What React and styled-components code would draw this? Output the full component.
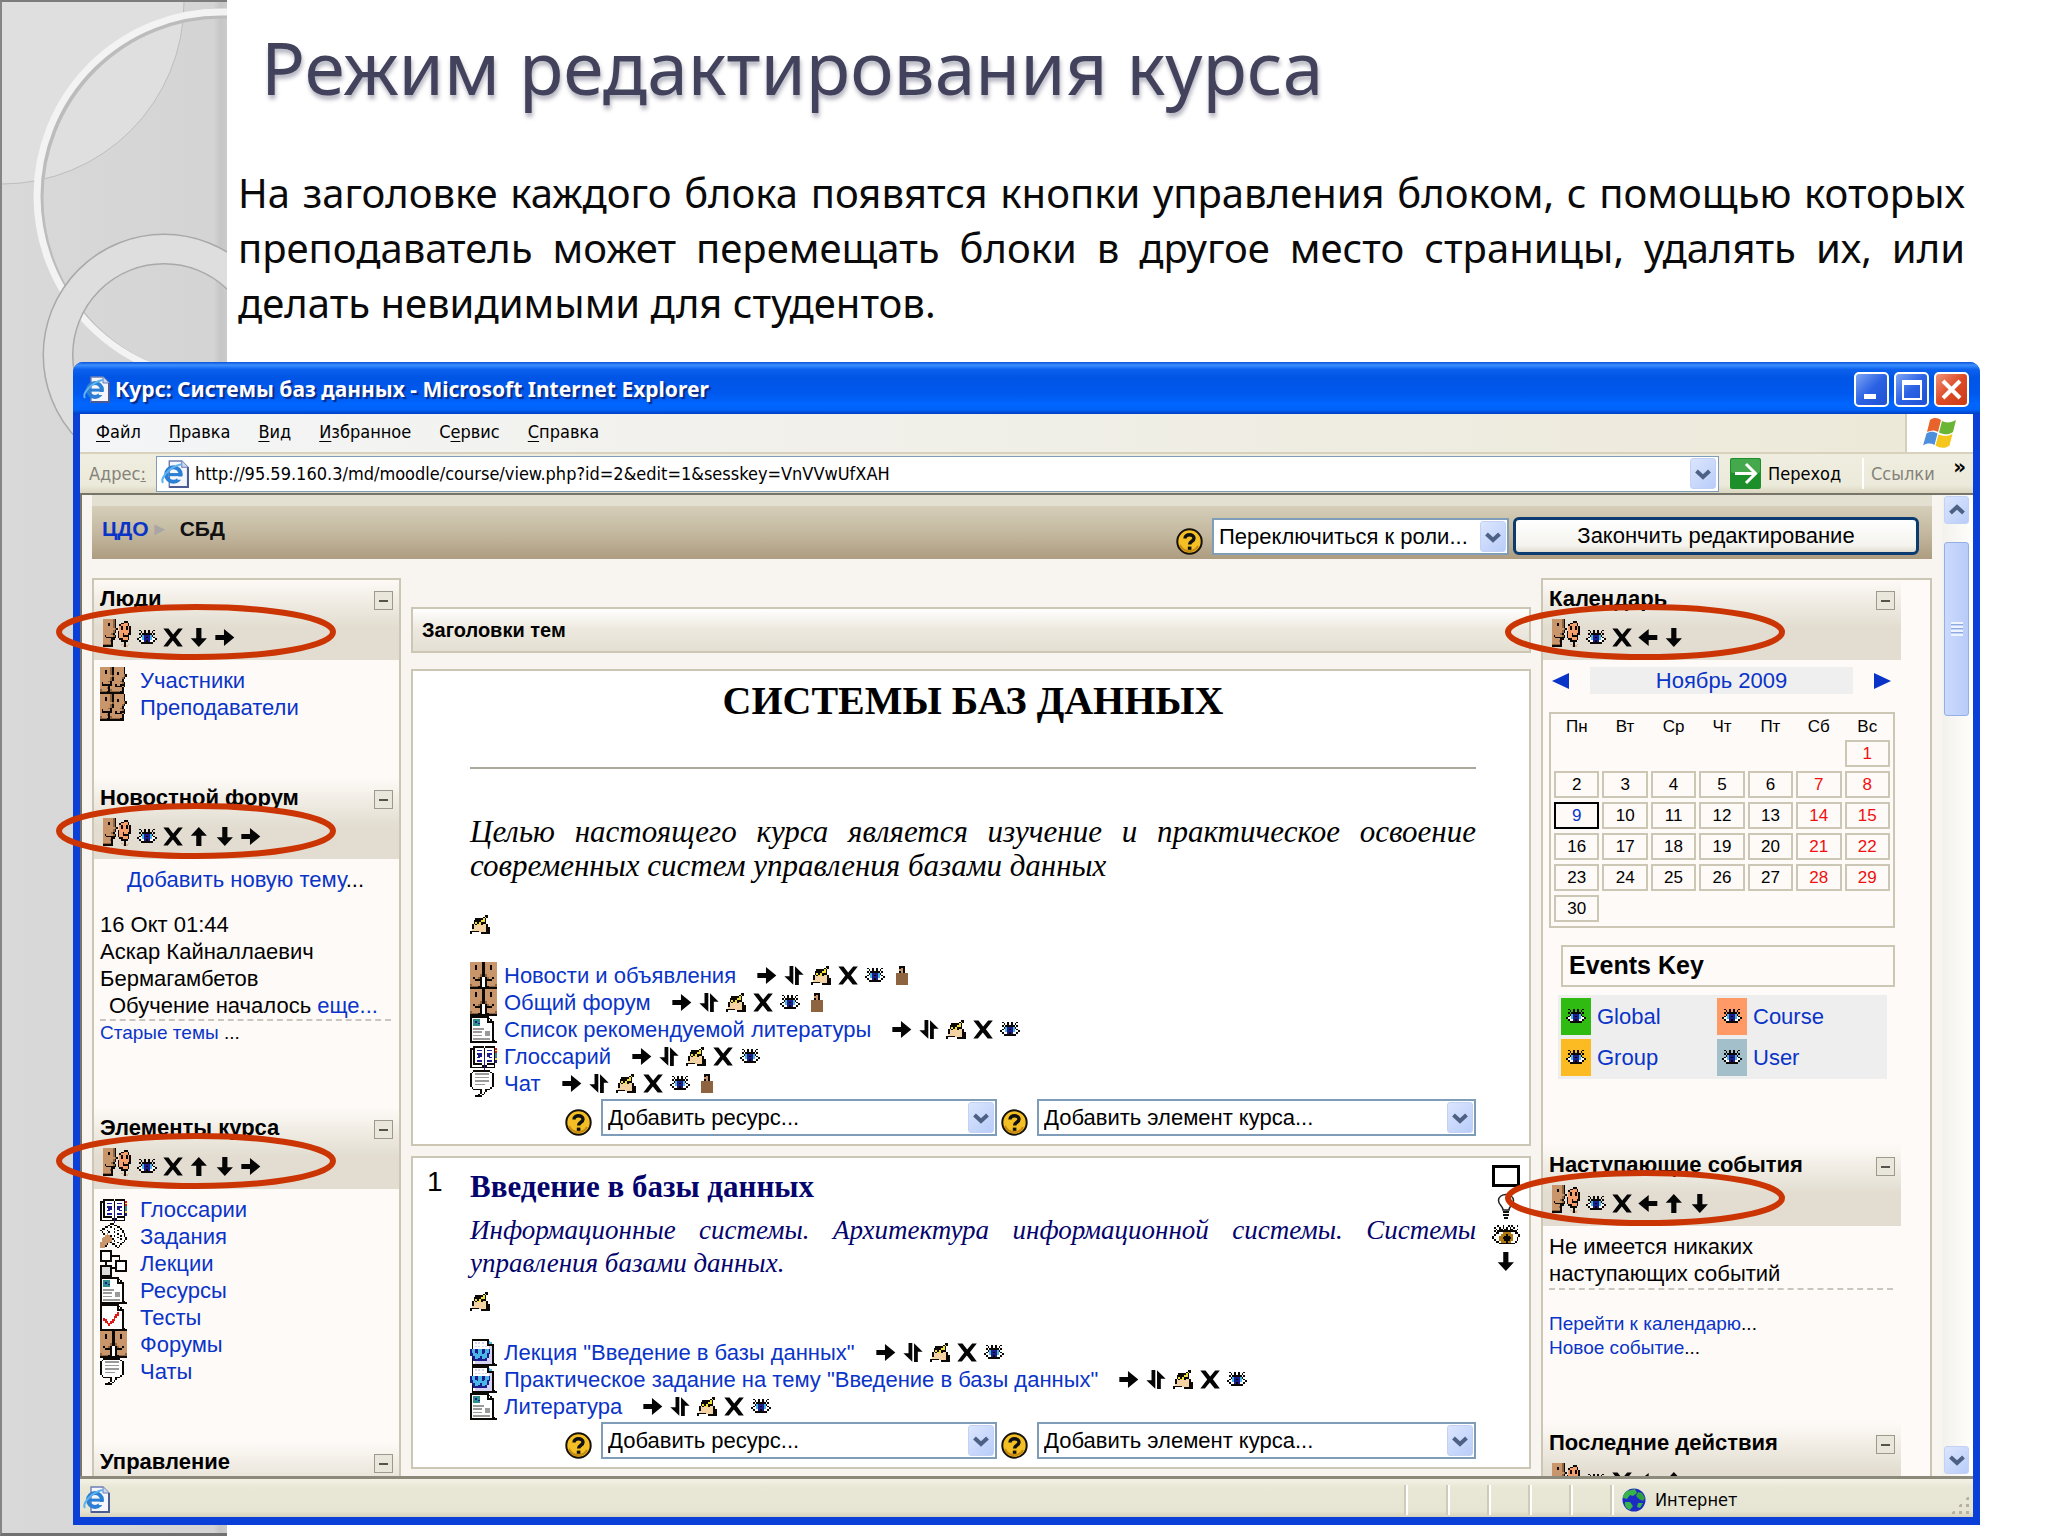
import React from "react";
import styled, { createGlobalStyle, css } from "styled-components";

const sans = `"Liberation Sans", Arial, sans-serif`;
const serif = `"Liberation Serif", "Times New Roman", serif`;
const tahoma = `"DejaVu Sans Condensed", "DejaVu Sans", Tahoma, sans-serif`;
const slideFont = `"Noto Sans", "Open Sans", sans-serif`;

/* ---------- icons ---------- */

const palette = {
  k: "#0b0806",
  b: "#c8966a",
  l: "#dcb187",
  m: "#8d6340",
  w: "#ffffff",
  g: "#9a9a9a",
  s: "#dcdcdc",
  o: "#f5a06c",
  t: "#2f8f8a",
  n: "#1c1c8c",
  u: "#2f62d8",
  y: "#f2e13a",
  r: "#e01818",
  p: "#f3d3a4",
  c: "#48b7e6",
  a: "#b07a12",
  v: "#d6d3f2",
};

const bitmaps = {
  users: [
    "bbbbbbmkbbbbbbk.",
    "bbbbbbmkbbbbbbk.",
    "bbbkbbmkbbbbbbk.",
    "bbbkbbmkbbkbbbk.",
    "bbbbbbmkbbkbbbmk",
    "bbbbbbbmbbbbbbmk",
    "bbbbbbmkbbbbbmk.",
    "bbbbbbmkbbbbbk..",
    "bbbbbmkbbbbbmk..",
    "bkbbbbkbbbbbbmk.",
    "bkkkkkkbbkbbkkk.",
    "bbbbbkbbbkkkkbk.",
    "bbbbmkbbbbbbbk..",
    "mbbbbkmbbbbbbk..",
    "mmmmkkmmmmmmkk..",
    "kkkkkkkkkkkkkk..",
  ],
  forum: [
    "bbbbbbbkkbbbbbbb",
    "bbbbbbbkkbbbbbbb",
    "bbbkbbbkkbbbkbbb",
    "bbbkbbbkkbbbkbbb",
    "bbbkbbbkkbbbkbbb",
    "bbbbbbbkkbbbbbbb",
    "bbbbbbbkkbbbbbbb",
    "bbbbbbmkkmbbbbbb",
    "bbbbbbmkkmbbbbbb",
    "bbkbbmkwwkmbbkbb",
    "bbbkkkkwwkkkkbbb",
    "bbbbbbkwwkbbbbbb",
    "bbbbbbkwwkbbbbbb",
    "mbbbbbkwwkbbbbbm",
    "mmmmmkkwwkkmmmmm",
    "kkkkkkkkkkkkkkkk",
  ],
  group: [
    "bbbbbbmk.........",
    "bbbbbbmk.....kk..",
    "bbbkbbmk...kkook.",
    "bbbkbbmk..kooook.",
    "bbbbbbmk..okookok",
    "bbbbbbbmk.okookok",
    "bbbbbbmk..ooooook",
    "bbbbbbmk.kooooook",
    "bbbbbmk..kookookk",
    "bkbbbbmk.kookkkk.",
    "bbkkkkkk.koooook.",
    "bbbbbkk...kkoook.",
    "bbbbmk.....kkkk..",
    "bbbbbk.......k...",
    "mmmmmk.....l.k.l.",
    "kkkkkk......lkl..",
  ],
  resource: [
    "kkkkkkkkkkk.....",
    "kwwwwwwwwwkk....",
    "kwttttwwwwkwk...",
    "kwtnttwwwwkkkk..",
    "kwtttnwwwwwwwk..",
    "kwttttwwwwwwwk..",
    "kwwwwwwwwwwwwk..",
    "kwggggggwwwwwk..",
    "kwwwwwwwwwwwwk..",
    "kwgggggwwgggwk..",
    "kwwwwwwwwgggwk..",
    "kwgggggwwgggwk..",
    "kwwwwwwwwwwwwk..",
    "kwggggggggggwk..",
    "kwwwwwwwwwwwwkk.",
    "kkkkkkkkkkkkkkkk",
  ],
  quiz: [
    "kkkkkkkkkkk.....",
    "kwwwwwwwwwkk....",
    "kwwwwwwwwwkwk...",
    "kwwwwwwwwwkkkk..",
    "kwwwwwwwwwwwwk..",
    "kwwwwwwwwwrwwk..",
    "kwwwwwwwwrrwwk..",
    "kwwwwwwwrrwwwk..",
    "kwrwwwwwrwwwwk..",
    "kwrrwwwrrwwwwk..",
    "kwwrrwrrwwwwwk..",
    "kwwwrrrwwwwwwk..",
    "kwwwwrwwwwwwwk..",
    "kwwwwwwwwwwwwk..",
    "kwwwwwwwwwwwwkk.",
    "kkkkkkkkkkkkkkkk",
  ],
  glossary: [
    "................",
    "................",
    "..kkkkkk.kkkkkk.",
    "kkkwwwwwkwwwwwkr",
    "kwkwnnnwkwnnnwky",
    "kwkwwwwwkwwwwwkr",
    "kwkwnnnwkwnnnwkt",
    "kwkwwnnwnwnnwwkt",
    "kwkwnnwwnwwnnwku",
    "kwkwwwwwnwwwwwky",
    "kwkwnnnwnwnnnwkn",
    "kwkwwwwwnwwwwwkn",
    "kwkkkkkwnwkkkkk.",
    "kwwwwwwknkwwwwk.",
    "kkkkkkkknkkkkkk.",
    "........n.......",
  ],
  chat: [
    "..kkkkkkkkkk....",
    ".kwwwwwwwwwwk...",
    "kwwggggggggwwk..",
    "kwwwwwwwwwwwwk..",
    "kwwggggggggwwk..",
    "kwwwwwwwwwwwwk..",
    "kwwggggggggwwk..",
    "kwwwwwwwwwwwwk..",
    "kwwggggggwwwwk..",
    "kwwwwwwwwwwwwk..",
    ".kwwwwwwwwwwk...",
    "..kkkkkwwkkk....",
    "......kwwk......",
    "......kwk.......",
    ".....kwk........",
    "...kkkk.........",
  ],
  assignment: [
    "......kk........",
    ".....kwwkk......",
    "...kkwkwwwkk....",
    ".kkwwwwwkwwwk...",
    "kwwwkwwwwwkwwk..",
    ".kwwwkwwkwwwwk..",
    "..kwbwwwwwkwwwk.",
    "...bbbkwkwwwkwk.",
    "..bbbbbwwwkwwwwk",
    ".bbbbbbkwwwwkwwk",
    ".bbbbbbwkwwwwwk.",
    "bbbbbbkwwwkwwk..",
    "bbbbk..kkwwwk...",
    "bbbk.....kwk....",
    "bbb.......k.....",
    "................",
  ],
  lesson: [
    "kkkkkkk.........",
    "kwwwwwk.........",
    "kwwwwwk.........",
    "kwwwwwkkkkkk....",
    "kwwwwwk....k....",
    "kwwwwwk....k....",
    "kkkkkkk..kkkkkkk",
    "...k.....kwwwwwk",
    "...k.....kwwwwwk",
    "kkkkkkk..kwwwwwk",
    "kssssskkkkwwwwwk",
    "ksssssk..kwwwwwk",
    "ksssssk..kkkkkkk",
    "ksssssk.........",
    "ksssssk.........",
    "kkkkkkk.........",
  ],
  word: [
    ".kkkkkkkkkk.....",
    ".kwwwwwwwwkc....",
    ".kwvwvwvwwkcc...",
    ".kwwwwwwwwkkkk..",
    ".kwvwvwvwvwvvk..",
    ".kwwwwwwwwwvvk..",
    "nccnnccnnccnvk..",
    "nccnnccnnccnvk..",
    "nnccnccnccnnvk..",
    "nnccccccccnvvk..",
    ".nncccncccnvvk..",
    ".knccnnccnvvvk..",
    ".knnnnnnnnvvvk..",
    ".kwvvvvvvvvvvk..",
    ".kwvvvvvvvvvvkk.",
    ".kkkkkkkkkkkkkkk",
  ],
  hand: [
    "........kk.",
    ".......kyk.",
    "...kkkkyk..",
    "..kkkkyyk..",
    "..kykykkk..",
    ".kpkyykppk.",
    ".kpppppppk.",
    ".kpppppppkk",
    ".ppppppppkk",
    "kkkkkppppkk",
    "k.....kkkkk",
  ],
  eye: [
    "...........",
    ".k..k.k..k.",
    "..k.k.k.k..",
    ".k.kkkkk.k.",
    "..kcnnnck..",
    ".kwcnkncwk.",
    "kwwcnnncwwk",
    ".kwwnknwwk.",
    "..kkkkkkk..",
    "...........",
    "...........",
  ],
  person: [
    "...kkk...",
    "...kbk...",
    "...bbk...",
    "...kbk...",
    "..mmmmm..",
    "..mmmmm..",
    "..mmmmm..",
    "..mmmmm..",
    "..mmmmm..",
    "..mmmmm..",
    "..mmmmm..",
  ],
  bigEye: [
    "...k..k..k.k..k.",
    ".k..k.k.k.k.k...",
    "..k.kk.kk.kk..k.",
    ".k.kkkkkkkkkkk..",
    "..kkwwaaaaawwkk.",
    ".kwwwaaakaaawwwk",
    "kwwwaaakkkaawwwk",
    "kwwwaakkkkkawwk.",
    ".kwwaaakkkaawwk.",
    "..kkwaaakaawwk..",
    "....kkkkkkkkk...",
    "................",
  ],
};

const Pixmap = styled.svg`
  display: block;
  flex: none;
  width: ${(p) => p.$w}px;
  height: ${(p) => p.$h}px;
`;

const Bitmap = ({ name, w, h }) => {
  const rows = bitmaps[name];
  const cells = [];
  rows.forEach((row, y) => {
    let x = 0;
    while (x < row.length) {
      let end = x + 1;
      while (end < row.length && row[end] === row[x]) end++;
      if (row[x] !== ".") {
        cells.push(<rect key={`${x}-${y}`} x={x} y={y} width={end - x} height="1" fill={palette[row[x]]} />);
      }
      x = end;
    }
  });
  return (
    <Pixmap
      $w={w}
      $h={h}
      viewBox={`0 0 ${rows[0].length} ${rows.length}`}
      preserveAspectRatio="none"
      shapeRendering="crispEdges"
      aria-hidden="true"
    >
      {cells}
    </Pixmap>
  );
};

const shapes = {
  right: "M0 4H5V0.5L11 5.5L5 10.5V7H0Z",
  left: "M11 4H6V0.5L0 5.5L6 10.5V7H11Z",
  up: "M4 11V5H0.8L5.5 0L10.2 5H7V11Z",
  down: "M4 0V6H0.8L5.5 11L10.2 6H7V0Z",
  del: "M0 0.3H3L5.7 3.7L8.6 0.3H11.3L7.3 5.4L11.3 10.7H8.3L5.5 7.2L2.6 10.7H0L4 5.5Z",
  move: "M3 0H5.2V10.800L0 6H3ZM6.200 11V0.2L11.200 5H8.400V11Z",
};

const ActionIcon = ({ name }) => {
  if (shapes[name]) {
    return (
      <Pixmap $w={20} $h={19} viewBox="-0.2 0 11.600 11" aria-hidden="true">
        <path d={shapes[name]} fill="#050505" />
      </Pixmap>
    );
  }
  return <Bitmap name={name} w={20} h={19} />;
};

const ExplorerIcon = ({ size = 27 }) => (
  <Pixmap $w={size} $h={size} viewBox="0 0 27 27" aria-hidden="true">
    <path d="M8 1H20L26 7V26H8Z" fill="#f4f6fb" stroke="#6b7fb5" strokeWidth="1.4" />
    <path d="M20 1V7H26" fill="#cfd8ee" stroke="#6b7fb5" />
    <path d="M26 7V26H8" fill="none" stroke="#4a5c93" strokeWidth="2" />
    <ellipse cx="12" cy="14" rx="7" ry="7" fill="none" stroke="#2b7fd4" strokeWidth="4" />
    <rect x="7" y="12.6" width="12" height="3" fill="#2b7fd4" />
    <path d="M15 16H22V19H16Z" fill="#f4f6fb" />
    <path d="M2 22C-1 18 8 6 20 4" fill="none" stroke="#5eb3ee" strokeWidth="2" />
  </Pixmap>
);

const HelpIcon = () => (
  <Pixmap $w={27} $h={27} viewBox="0 0 27 27" aria-hidden="true">
    <circle cx="13.5" cy="13.5" r="12.2" fill="#f3bf25" stroke="#15110a" strokeWidth="2" />
    <path d="M4 17A10 10 0 0 0 22 18" fill="none" stroke="#c98a12" strokeWidth="2" />
    <path d="M9 10.5C9 5.5 18 5.5 18 10.3C18 13.5 13.6 13 13.6 16.6" fill="none" stroke="#111" strokeWidth="3.4" />
    <rect x="11.8" y="18.6" width="3.6" height="3.2" fill="#111" />
  </Pixmap>
);

const Chevron = ({ up }) => (
  <Pixmap $w={16} $h={12} viewBox="0 0 16 12" aria-hidden="true">
    <path d={up ? "M1.5 9L8 3L14.5 9" : "M1.5 3L8 9L14.5 3"} fill="none" stroke="#4d6185" strokeWidth="4" />
  </Pixmap>
);

const WindowsFlag = () => (
  <Pixmap $w={36} $h={32} viewBox="0 0 36 32" aria-hidden="true">
    <path d="M8 3C12 0 16 1 19 3L16 15C13 13 9 13 5 15Z" fill="#e8622c" />
    <path d="M20 4C24 6 29 6 34 3L31 15C27 18 22 18 17 15.500Z" fill="#6bb536" />
    <path d="M4.500 16.500C8 14 12 14.500 15.500 16.500L12.500 28C9 26 5 26 1 28.500Z" fill="#4d8fdc" />
    <path d="M16.500 17.500C21 19.500 26 19.500 30.500 17L27.500 28.500C23 32 18 31 13.500 28.500Z" fill="#f5c61c" />
  </Pixmap>
);

const Globe = () => (
  <Pixmap $w={24} $h={24} viewBox="0 0 24 24" aria-hidden="true">
    <circle cx="12" cy="12" r="11.500" fill="#1b2bc4" />
    <path d="M5 3L13 1L15 5L11 8L8 7L5 11L1 10C1 7 3 4 5 3Z" fill="#37b34a" />
    <path d="M16 4L20 5L23 10L21 13L17 11L14 8Z" fill="#2f9f41" />
    <path d="M3 14L8 14L11 18L8 22C5 21 2 18 3 14Z" fill="#37b34a" />
    <path d="M16 15L21 15L18 20L15 19Z" fill="#37b34a" />
  </Pixmap>
);

/* ---------- slide ---------- */

const GlobalStyle = createGlobalStyle`
  * { box-sizing: border-box; }
  body { margin: 0; background: #fff; }
  a { color: #0a34c8; text-decoration: none; }
  h1, h2, h3, p, ul { margin: 0; padding: 0; font-weight: normal; }
  ul { list-style: none; }
  button { font: inherit; margin: 0; padding: 0; }
`;

const Slide = styled.main`
  position: relative;
  display: flex;
  flex-direction: column;
  height: 100vh;
  padding: 14px 68px 11px 73px;
  overflow: hidden;
  font-family: ${sans};
`;

const Ornament = styled.svg`
  position: absolute;
  left: 0;
  top: 0;
  width: 227px;
  height: 100%;
  background: linear-gradient(90deg, #d9d9d9, #d4d4d4 94%, #c6c6c6 97%, #cbcbcb);
  border-left: 2px solid #858585;
  border-top: 2px solid #7c7c7c;
  border-bottom: 3px solid #707070;
`;

const SlideTitle = styled.h1`
  position: relative;
  padding-left: 188px;
  font: 73px/106px ${slideFont};
  color: #42425c;
  text-shadow: 1px 4px 4px rgba(60, 60, 90, 0.4);
`;

const SlideText = styled.p`
  position: relative;
  margin: 45px 15px 0 165px;
  padding-bottom: 32px;
  font: 40px/55px ${slideFont};
  color: #0a0a0a;
  text-align: justify;
`;

const decor = (
  <Ornament aria-hidden="true">
    <circle cx="0" cy="0" r="182" fill="#dfdfdf" stroke="#bdbdbd" />
    <circle cx="221" cy="196" r="182" fill="none" stroke="#bcbcbc" strokeWidth="5" />
    <circle cx="219" cy="194" r="184" fill="none" stroke="#f3f3f3" strokeWidth="7" />
    <circle cx="162" cy="353" r="106" fill="none" stroke="#a9a9a9" strokeWidth="31" />
    <circle cx="162" cy="353" r="106" fill="none" stroke="#dedede" strokeWidth="28" />
  </Ornament>
);

/* ---------- browser window ---------- */

const BrowserWindow = styled.section`
  position: relative;
  display: flex;
  flex-direction: column;
  flex: 1;
  min-height: 0;
  border: solid #0a3fd8;
  border-width: 0 7px 8px;
  border-radius: 10px 10px 0 0;
  background: #ece9d8;
  box-shadow: inset 1px 0 0 #1663f5;
`;

const TitleBar = styled.header`
  display: flex;
  align-items: center;
  gap: 5px;
  height: 52px;
  margin: 0 -7px;
  padding: 2px 11px 0 10px;
  border-radius: 10px 10px 0 0;
  background: linear-gradient(#0a53d8, #3c90ff 6%, #0c62ee 14%, #0055e5 30%, #0058ee 60%, #0066ff 82%, #0062f8 92%, #003fc4);
`;

const WindowTitle = styled.h2`
  flex: 1;
  font: bold 21px/28px ${slideFont};
  color: #fff;
  text-shadow: 2px 2px 1px #0a2a86;
`;

const Caption = styled.button`
  display: grid;
  place-items: center;
  width: 35px;
  height: 35px;
  border: 2px solid #fff;
  border-radius: 5px;
  background: ${(p) =>
    p.$close ? "linear-gradient(135deg, #f0937a, #de4a26 50%, #c83a16)" : "linear-gradient(135deg, #7ea4f4, #2b62e4 50%, #1f50d2)"};
`;

const Toolbar = styled.nav`
  display: flex;
  align-items: stretch;
  height: 40px;
  padding-left: 2px;
  background: linear-gradient(90deg, #f4f5f7, #f1f0ea 40%, #ece9d8);
  border-bottom: 2px solid #d8d2bd;
`;

const MenuItem = styled.a`
  margin: 0 14px;
  font: 18px/36px ${tahoma};
  color: #000;
  u {
    text-underline-offset: 3px;
  }
`;

const LogoCell = styled.div`
  display: grid;
  place-items: center;
  width: 68px;
  margin-left: auto;
  background: #fff;
  border-left: 2px solid #d3cfbc;
`;

const AddressBar = styled.div`
  display: flex;
  align-items: center;
  height: 41px;
  padding-left: 9px;
  font: 18px/28px ${tahoma};
  background: linear-gradient(#efeddf, #eceada 80%, #dad5c0);
  border-bottom: 2px solid #77746a;
`;

const AddressLabel = styled.label`
  width: 67px;
  color: #84827a;
`;

const AddressField = styled.div`
  display: flex;
  align-items: center;
  flex: 1;
  height: 36px;
  padding: 0 2px 0 4px;
  background: #fff;
  border: 1px solid #7f9db9;
`;

const AddressInput = styled.input`
  flex: 1;
  min-width: 0;
  padding: 0;
  margin-left: 6px;
  border: 0;
  outline: 0;
  font: inherit;
  background: none;
`;

const arrowFace = css`
  display: grid;
  place-items: center;
  border: 1px solid #c3d1f5;
  border-radius: 3px;
  background: linear-gradient(135deg, #dbe5fd, #b9cdfa);
`;

const DropButton = styled.button`
  ${arrowFace}
  width: 26px;
  height: 31px;
`;

const GoButton = styled.button`
  display: flex;
  align-items: center;
  gap: 7px;
  width: 134px;
  margin-left: 11px;
  border: 0;
  border-right: 2px solid #fff;
  background: none;
`;

const LinksMenu = styled.a`
  display: flex;
  justify-content: space-between;
  width: 109px;
  padding: 0 7px;
  color: #84827a;
  b {
    color: #000;
    font-size: 22px;
    line-height: 14px;
  }
`;

const Viewport = styled.div`
  display: flex;
  flex: 1;
  min-height: 0;
  border-left: 2px solid #77746a;
  background: #f8f5f1;
  overflow-x: visible;
  overflow-y: clip;
`;

const ScrollTrack = styled.div`
  display: flex;
  flex-direction: column;
  width: 31px;
  padding: 1px 4px 2px 2px;
  background: linear-gradient(90deg, #f3f1ec, #fefefb);
`;

const ScrollButton = styled.button`
  ${arrowFace}
  width: 100%;
  height: 28px;
`;

const ScrollThumb = styled.div`
  display: grid;
  place-items: center;
  height: 174px;
  margin: 18px 0 auto;
  border: 1px solid #94aee8;
  border-radius: 3px;
  background: linear-gradient(90deg, #cbdafd, #b9cbf8);
  span {
    width: 12px;
    height: 14px;
    background: repeating-linear-gradient(#eef4fe 0 2px, #8caae0 2px 3px, transparent 3px 4px);
  }
`;

const StatusBar = styled.footer`
  display: flex;
  align-items: center;
  height: 41px;
  padding: 3px 0 0 3px;
  border-top: 3px solid #8d897b;
  background: linear-gradient(#f4f2e6, #e9e8d7 20%, #e6e4d2 85%, #d6d2bd);
  font: 18px/28px ${tahoma};
`;

const StatusCell = styled.div`
  display: flex;
  align-items: center;
  gap: 9px;
  width: ${(p) => p.$w}px;
  height: 30px;
  padding-left: 8px;
  border-left: 2px solid #fff;
  box-shadow: -2px 0 0 #cfcbb8;
  &:first-of-type {
    margin-left: auto;
  }
`;

const Grip = styled.span`
  align-self: flex-end;
  width: 20px;
  height: 20px;
  margin: 0 3px 0 auto;
  background: radial-gradient(circle, #b5b19e 2px, transparent 2px) 0 0 / 7px 7px;
  clip-path: polygon(100% 0, 100% 100%, 0 100%);
`;

/* ---------- course page ---------- */

const Page = styled.div`
  flex: 1;
  min-width: 0;
  padding: 0 10px;
`;

const NavBar = styled.div`
  display: flex;
  align-items: center;
  height: 64px;
  padding: 11px 13px 0 10px;
  border-top: 11px solid #e3e0d2;
  background: linear-gradient(#d5ceb9, #c4b9a0 50%, #ad9c80);
  font: 22px/28px ${sans};
`;

const Crumb = styled.a`
  margin-top: -18px;
  font-weight: bold;
  font-size: 21px;
  color: ${(p) => (p.$current ? "#111" : "#0a34c8")};
`;

const CrumbArrow = styled.span`
  width: 31px;
  margin-top: -18px;
  padding-left: 2px;
  font-size: 18px;
  color: #aaa6a6;
`;

const RoleForm = styled.form`
  display: flex;
  align-items: flex-end;
  gap: 4px;
  margin: -4px 0 0 auto;
`;

const HelpLink = styled.a`
  flex: none;
  margin-right: 5px;
`;

const SelectBox = styled.span`
  position: relative;
  flex: ${(p) => p.$grow || "none"};
  width: ${(p) => p.$w || "auto"};
  select {
    display: block;
    appearance: none;
    width: 100%;
    height: 37px;
    padding: 0 32px 0 5px;
    border: 2px solid #7f9db9;
    border-radius: 0;
    background: #fff;
    color: #000;
    font: 22px/28px ${sans};
  }
`;

const SelectArrow = styled.span`
  ${arrowFace}
  position: absolute;
  top: 3px;
  right: 3px;
  width: 26px;
  height: 31px;
  pointer-events: none;
`;

const Select = ({ label, ...rest }) => (
  <SelectBox {...rest}>
    <select aria-label={label}>
      <option>{label}</option>
    </select>
    <SelectArrow>
      <Chevron />
    </SelectArrow>
  </SelectBox>
);

const EditButton = styled.button`
  width: 406px;
  height: 38px;
  border: 3px solid #0b3b70;
  border-radius: 6px;
  background: linear-gradient(#fff, #f4f3ee 80%, #e0ddd0);
  color: #000;
`;

const Columns = styled.div`
  display: grid;
  grid-template-columns: 309px minmax(0, 1fr) 391px;
  gap: 10px;
  align-items: start;
  padding-top: 19px;
`;

const Side = styled.aside`
  height: 1000px;
  padding-right: ${(p) => p.$inset || 0}px;
  border: 2px solid #cbc7b4;
  border-bottom: 0;
  background: #fefaf7;
  font: 22px/27px ${sans};
`;

const BlockHeader = styled.header`
  position: relative;
  height: 82px;
  margin-top: ${(p) => (p.$first ? -2 : 0)}px;
  padding: 7px 6px 0;
  background: linear-gradient(rgba(255, 255, 255, 0), #e9e5da 45%, #e3ddd1 60%);
`;

const BlockTitle = styled.div`
  display: flex;
  justify-content: space-between;
  h3 {
    font-weight: bold;
    font-size: 22px;
    line-height: 28px;
  }
`;

const Collapse = styled.button`
  display: grid;
  place-items: center;
  width: 19px;
  height: 19px;
  margin-top: 6px;
  border: 1px solid #9c998d;
  background: #e9e6dc;
  &::before {
    content: "";
    width: 9px;
    height: 2px;
    background: #55534c;
  }
`;

const Controls = styled.div`
  display: flex;
  align-items: flex-end;
  gap: 6px;
  height: 28px;
  margin: 6px 0 0 3px;
`;

const IconLink = styled.a`
  display: block;
`;

const Highlight = styled.svg`
  position: absolute;
  z-index: 2;
  left: -38px;
  top: 26px;
  width: 280px;
  height: 56px;
  overflow: visible;
  pointer-events: none;
`;

const BlockBody = styled.div`
  padding: 7px 8px 56px 6px;
`;

const IconRow = styled.li`
  display: flex;
  align-items: center;
  gap: ${(p) => p.$gap || 13}px;
  height: 27px;
`;

const NewTopic = styled.p`
  margin-bottom: 18px;
  text-align: center;
`;

const Post = styled.div`
  border-bottom: 2px dashed #c9c6bf;
`;

const PostBody = styled.p`
  padding-left: 9px;
  white-space: nowrap;
`;

const FooterLinks = styled.p`
  padding: ${(p) => p.$top || 0}px 0 6px;
  font-size: 19px;
  line-height: 24px;
`;

const Block = ({ title, controls, marked, first, children }) => (
  <section>
    <BlockHeader $first={first}>
      <BlockTitle>
        <h3>{title}</h3>
        <Collapse type="button" aria-label={`Свернуть: ${title}`} />
      </BlockTitle>
      <Controls>
        <IconLink href="#group" aria-label="Роли">
          <Bitmap name="group" w={28} h={28} />
        </IconLink>
        {controls.map((name) => (
          <IconLink key={name} href={`#${name}`} aria-label={name}>
            <ActionIcon name={name} />
          </IconLink>
        ))}
      </Controls>
      {marked && (
        <Highlight viewBox="0 0 280 56" aria-hidden="true">
          <ellipse cx="140" cy="28" rx="137" ry="25" fill="none" stroke="#cb3503" strokeWidth="6" />
        </Highlight>
      )}
    </BlockHeader>
    {children && <BlockBody>{children}</BlockBody>}
  </section>
);

const LinkList = ({ items }) => (
  <ul>
    {items.map(([icon, text]) => (
      <IconRow key={text}>
        <Bitmap name={icon} w={27} h={27} />
        <a href="#module">{text}</a>
      </IconRow>
    ))}
  </ul>
);

const Center = styled.section`
  padding-top: 29px;
`;

const OutlineTitle = styled.h2`
  height: 46px;
  margin-bottom: 16px;
  padding-left: 9px;
  border: 2px solid #cbc7b4;
  background: linear-gradient(#fff, #eeeae0 45%, #e4dfd3);
  font: bold 20px/42px ${sans};
`;

const Topic = styled.article`
  display: grid;
  grid-template-columns: 57px minmax(0, 1fr) 53px;
  margin-bottom: 10px;
  padding: ${(p) => p.$top}px 0 8px;
  border: 2px solid #cbc7b4;
  background: #fff;
`;

const TopicNumber = styled.span`
  padding-left: 14px;
  font: 28px/24px ${sans};
`;

const CourseTitle = styled.h2`
  padding-bottom: 43px;
  border-bottom: 2px solid #aaa99b;
  font: bold 40px/46px ${serif};
  text-align: center;
`;

const CourseGoal = styled.p`
  margin-top: 46px;
  font: italic 31px/34px ${serif};
  text-align: justify;
`;

const TopicTitle = styled.h3`
  font: bold 31px/34px ${serif};
  color: #04046c;
`;

const TopicSummary = styled.p`
  margin-top: 10px;
  font: italic 27px/33px ${serif};
  color: #04046c;
  text-align: justify;
`;

const EditSummary = styled.a`
  display: block;
  margin: ${(p) => p.$top}px 0 28px;
`;

const Activities = styled.ul`
  font: 22px/27px ${sans};
`;

const Actions = styled.span`
  display: flex;
  gap: 7px;
  margin-left: 14px;
`;

const AddRow = styled.form`
  display: flex;
  align-items: flex-end;
  gap: 4px;
  margin-top: 2px;
  padding-left: 95px;
`;

const TopicTools = styled.div`
  display: flex;
  flex-direction: column;
  align-items: center;
  gap: 6px;
  margin-top: -5px;
  padding-left: 7px;
`;

const ActivityList = ({ items }) => (
  <Activities>
    {items.map(({ icon, text, groups }) => (
      <IconRow key={text} $gap={7}>
        <Bitmap name={icon} w={27} h={27} />
        <a href="#activity">{text}</a>
        <Actions>
          {["right", "move", "hand", "del", "eye"].map((name) => (
            <IconLink key={name} href={`#${name}`} aria-label={name}>
              <ActionIcon name={name} />
            </IconLink>
          ))}
          {groups && <ActionIcon name="person" />}
        </Actions>
      </IconRow>
    ))}
  </Activities>
);

const AddForm = () => (
  <AddRow>
    <HelpLink href="#help" aria-label="Помощь">
      <HelpIcon />
    </HelpLink>
    <Select label="Добавить ресурс..." $grow="396 1 0" />
    <HelpLink href="#help" aria-label="Помощь">
      <HelpIcon />
    </HelpLink>
    <Select label="Добавить элемент курса..." $grow="439 1 0" />
  </AddRow>
);

/* ---------- calendar ---------- */

const MonthNav = styled.div`
  display: flex;
  align-items: center;
  justify-content: space-between;
  margin: 0 2px 18px 3px;
  span {
    width: 263px;
    background: #f0efef;
    text-align: center;
  }
`;

const Calendar = styled.table`
  width: 346px;
  border: 2px solid #cbc7b4;
  border-spacing: 3px 4px;
  table-layout: fixed;
  font: 17px/23px ${sans};
  text-align: center;
  th {
    height: 18px;
    padding: 0;
    font-weight: normal;
    line-height: 18px;
  }
`;

const Day = styled.td`
  height: 27px;
  padding: 0;
  border: 2px solid ${(p) => (p.$today ? "#000" : p.$empty ? "transparent" : "#cbc7b4")};
  color: ${(p) => (p.$weekend ? "#f01010" : p.$today ? "#0a34c8" : "#000")};
`;

const EventsKey = styled.h3`
  width: 334px;
  height: 42px;
  margin: 17px 0 8px 12px;
  padding-left: 6px;
  border: 2px solid #cbc7b4;
  font-weight: bold;
  font-size: 25px;
  line-height: 36px;
`;

const Legend = styled.ul`
  display: grid;
  grid-template-columns: 156px 1fr;
  gap: 4px 0;
  width: 329px;
  margin: 0 0 9px 9px;
  padding: 3px;
  background: #efeeee;
`;

const LegendItem = styled.li`
  display: flex;
  align-items: center;
  gap: 6px;
  height: 37px;
  span {
    display: grid;
    place-items: center;
    width: 30px;
    height: 37px;
    background: ${(p) => p.$color};
  }
`;

const NoEvents = styled.p`
  margin-bottom: 14px;
  padding-bottom: 1px;
  border-bottom: 2px dashed #c9c6bf;
`;

const weeks = [
  [0, 0, 0, 0, 0, 0, 1],
  [2, 3, 4, 5, 6, 7, 8],
  [9, 10, 11, 12, 13, 14, 15],
  [16, 17, 18, 19, 20, 21, 22],
  [23, 24, 25, 26, 27, 28, 29],
  [30, 0, 0, 0, 0, 0, 0],
];

const legend = [
  ["Global", "#2fbb12"],
  ["Course", "#ff9966"],
  ["Group", "#fcbb22"],
  ["User", "#a3bfca"],
];

const menu = [
  ["", "Ф", "айл"],
  ["", "П", "равка"],
  ["", "В", "ид"],
  ["", "И", "збранное"],
  ["С", "е", "рвис"],
  ["", "С", "правка"],
];

const MonthArrow = ({ back }) => (
  <IconLink href="#month" aria-label={back ? "Предыдущий месяц" : "Следующий месяц"}>
    <Pixmap $w={17} $h={16} viewBox="0 0 17 16" aria-hidden="true">
      <path d={back ? "M17 0V16L0 8Z" : "M0 0V16L17 8Z"} fill="#0a34c8" />
    </Pixmap>
  </IconLink>
);

const App = () => {
  return (
    <>
      <GlobalStyle />
      <Slide>
        {decor}
        <SlideTitle>Режим редактирования курса</SlideTitle>
        <SlideText>
          На заголовке каждого блока появятся кнопки управления блоком, с помощью которых преподаватель может
          перемещать блоки в другое место страницы, удалять их, или делать невидимыми для студентов.
        </SlideText>

        <BrowserWindow>
          <TitleBar>
            <ExplorerIcon />
            <WindowTitle>Курс: Системы баз данных - Microsoft Internet Explorer</WindowTitle>
            <Caption type="button" aria-label="Свернуть">
              <Pixmap $w={25} $h={25} viewBox="0 0 25 25">
                <rect x="5" y="17" width="12" height="5" fill="#fff" />
              </Pixmap>
            </Caption>
            <Caption type="button" aria-label="Развернуть">
              <Pixmap $w={25} $h={25} viewBox="0 0 25 25">
                <path d="M4 4H22V22H4Z" fill="none" stroke="#fff" strokeWidth="2" />
                <rect x="3" y="3" width="20" height="5" fill="#fff" />
              </Pixmap>
            </Caption>
            <Caption $close type="button" aria-label="Закрыть">
              <Pixmap $w={25} $h={25} viewBox="0 0 25 25">
                <path d="M4 4L21 21M21 4L4 21" stroke="#fff" strokeWidth="4" />
              </Pixmap>
            </Caption>
          </TitleBar>

          <Toolbar>
            {menu.map(([before, key, after]) => (
              <MenuItem key={key + after} href="#menu">
                {before}
                <u>{key}</u>
                {after}
              </MenuItem>
            ))}
            <LogoCell>
              <WindowsFlag />
            </LogoCell>
          </Toolbar>

          <AddressBar>
            <AddressLabel htmlFor="address">
              Адрес<u>:</u>
            </AddressLabel>
            <AddressField>
              <ExplorerIcon size={28} />
              <AddressInput
                id="address"
                defaultValue="http://95.59.160.3/md/moodle/course/view.php?id=2&edit=1&sesskey=VnVVwUfXAH"
              />
              <DropButton type="button" aria-label="Показать адреса">
                <Chevron />
              </DropButton>
            </AddressField>
            <GoButton type="button">
              <Pixmap $w={31} $h={31} viewBox="0 0 31 31" aria-hidden="true">
                <rect width="31" height="31" rx="2" fill="#1d8f2a" />
                <rect x="1" y="1" width="29" height="14" rx="2" fill="#43a94c" />
                <path d="M5 15.500H25M16 6L25.500 15.500L16 25" fill="none" stroke="#fff" strokeWidth="3" />
              </Pixmap>
              Переход
            </GoButton>
            <LinksMenu href="#links">
              Ссылки <b>»</b>
            </LinksMenu>
          </AddressBar>

          <Viewport>
            <Page>
              <NavBar>
                <Crumb href="#home">ЦДО</Crumb>
                <CrumbArrow>►</CrumbArrow>
                <Crumb $current href="#course">
                  СБД
                </Crumb>
                <RoleForm>
                  <HelpLink href="#help" aria-label="Помощь">
                    <HelpIcon />
                  </HelpLink>
                  <Select label="Переключиться к роли..." $w="297px" />
                  <EditButton type="button">Закончить редактирование</EditButton>
                </RoleForm>
              </NavBar>

              <Columns>
                <Side>
                  <Block first marked title="Люди" controls={["eye", "del", "down", "right"]}>
                    <LinkList
                      items={[
                        ["users", "Участники"],
                        ["users", "Преподаватели"],
                      ]}
                    />
                  </Block>
                  <Block marked title="Новостной форум" controls={["eye", "del", "up", "down", "right"]}>
                    <NewTopic>
                      <a href="#new">Добавить новую тему</a>...
                    </NewTopic>
                    <Post>
                      <p>16 Окт 01:44</p>
                      <p>Аскар Кайналлаевич Бермагамбетов</p>
                      <PostBody>
                        Обучение началось <a href="#more">еще...</a>
                      </PostBody>
                    </Post>
                    <FooterLinks>
                      <a href="#old">Старые темы</a> ...
                    </FooterLinks>
                  </Block>
                  <Block marked title="Элементы курса" controls={["eye", "del", "up", "down", "right"]}>
                    <LinkList
                      items={[
                        ["glossary", "Глоссарии"],
                        ["assignment", "Задания"],
                        ["lesson", "Лекции"],
                        ["resource", "Ресурсы"],
                        ["quiz", "Тесты"],
                        ["forum", "Форумы"],
                        ["chat", "Чаты"],
                      ]}
                    />
                  </Block>
                  <Block title="Управление" controls={["eye", "del", "up"]} />
                </Side>

                <Center>
                  <OutlineTitle>Заголовки тем</OutlineTitle>
                  <Topic $top={7}>
                    <span />
                    <div>
                      <CourseTitle>СИСТЕМЫ БАЗ ДАННЫХ</CourseTitle>
                      <CourseGoal>
                        Целью настоящего курса является изучение и практическое освоение современных систем
                        управления базами данных
                      </CourseGoal>
                      <EditSummary $top={32} href="#edit" aria-label="Редактировать">
                        <ActionIcon name="hand" />
                      </EditSummary>
                      <ActivityList
                        items={[
                          { icon: "forum", text: "Новости и объявления", groups: true },
                          { icon: "forum", text: "Общий форум", groups: true },
                          { icon: "resource", text: "Список рекомендуемой литературы" },
                          { icon: "glossary", text: "Глоссарий" },
                          { icon: "chat", text: "Чат", groups: true },
                        ]}
                      />
                      <AddForm />
                    </div>
                  </Topic>

                  <Topic $top={12}>
                    <TopicNumber>1</TopicNumber>
                    <div>
                      <TopicTitle>Введение в базы данных</TopicTitle>
                      <TopicSummary>
                        Информационные системы. Архитектура информационной системы. Системы управления базами данных.
                      </TopicSummary>
                      <EditSummary $top={12} href="#edit" aria-label="Редактировать">
                        <ActionIcon name="hand" />
                      </EditSummary>
                      <ActivityList
                        items={[
                          { icon: "word", text: 'Лекция "Введение в базы данных"' },
                          { icon: "word", text: 'Практическое задание на тему "Введение в базы данных"' },
                          { icon: "resource", text: "Литература" },
                        ]}
                      />
                      <AddForm />
                    </div>
                    <TopicTools>
                      <Pixmap $w={28} $h={22} viewBox="0 0 28 22" aria-hidden="true">
                        <rect x="1.500" y="1.500" width="25" height="19" fill="#fff" stroke="#000" strokeWidth="3" />
                      </Pixmap>
                      <Pixmap $w={18} $h={26} viewBox="0 0 18 26" aria-hidden="true">
                        <path
                          d="M6 17C6 13 1.500 12 1.500 7.500C1.500 -0.500 16.500 -0.500 16.500 7.500C16.500 12 12 13 12 17Z"
                          fill="#fff"
                          stroke="#222"
                          strokeWidth="1.500"
                        />
                        <path d="M6 19H12M6 22H12M7 25H11" stroke="#111" strokeWidth="2" />
                      </Pixmap>
                      <Bitmap name="bigEye" w={28} h={21} />
                      <ActionIcon name="down" />
                    </TopicTools>
                  </Topic>
                </Center>

                <Side $inset={29}>
                  <Block first marked title="Календарь" controls={["eye", "del", "left", "down"]}>
                    <MonthNav>
                      <MonthArrow back />
                      <span>
                        <a href="#november">Ноябрь 2009</a>
                      </span>
                      <MonthArrow />
                    </MonthNav>
                    <Calendar>
                      <thead>
                        <tr>
                          {["Пн", "Вт", "Ср", "Чт", "Пт", "Сб", "Вс"].map((d) => (
                            <th key={d}>{d}</th>
                          ))}
                        </tr>
                      </thead>
                      <tbody>
                        {weeks.map((week, i) => (
                          <tr key={i}>
                            {week.map((day, j) => (
                              <Day key={j} $empty={!day} $weekend={j > 4} $today={day === 9}>
                                {day || ""}
                              </Day>
                            ))}
                          </tr>
                        ))}
                      </tbody>
                    </Calendar>
                    <EventsKey>Events Key</EventsKey>
                    <Legend>
                      {legend.map(([text, color]) => (
                        <LegendItem key={text} $color={color}>
                          <span>
                            <ActionIcon name="eye" />
                          </span>
                          <a href="#events">{text}</a>
                        </LegendItem>
                      ))}
                    </Legend>
                  </Block>
                  <Block marked title="Наступающие события" controls={["eye", "del", "left", "up", "down"]}>
                    <NoEvents>
                      Не имеется никаких
                      <br />
                      наступающих событий
                    </NoEvents>
                    <FooterLinks $top={8}>
                      <a href="#calendar">Перейти к календарю</a>...
                      <br />
                      <a href="#event">Новое событие</a>...
                    </FooterLinks>
                  </Block>
                  <Block title="Последние действия" controls={["eye", "del", "left", "up"]} />
                </Side>
              </Columns>
            </Page>
            <ScrollTrack>
              <ScrollButton type="button" aria-label="Вверх">
                <Chevron up />
              </ScrollButton>
              <ScrollThumb>
                <span />
              </ScrollThumb>
              <ScrollButton type="button" aria-label="Вниз">
                <Chevron />
              </ScrollButton>
            </ScrollTrack>
          </Viewport>

          <StatusBar>
            <ExplorerIcon />
            <StatusCell $w={42} />
            <StatusCell $w={41} />
            <StatusCell $w={41} />
            <StatusCell $w={41} />
            <StatusCell $w={41} />
            <StatusCell $w={361}>
              <Globe />
              Интернет
              <Grip />
            </StatusCell>
          </StatusBar>
        </BrowserWindow>
      </Slide>
    </>
  );
};

export default App;
